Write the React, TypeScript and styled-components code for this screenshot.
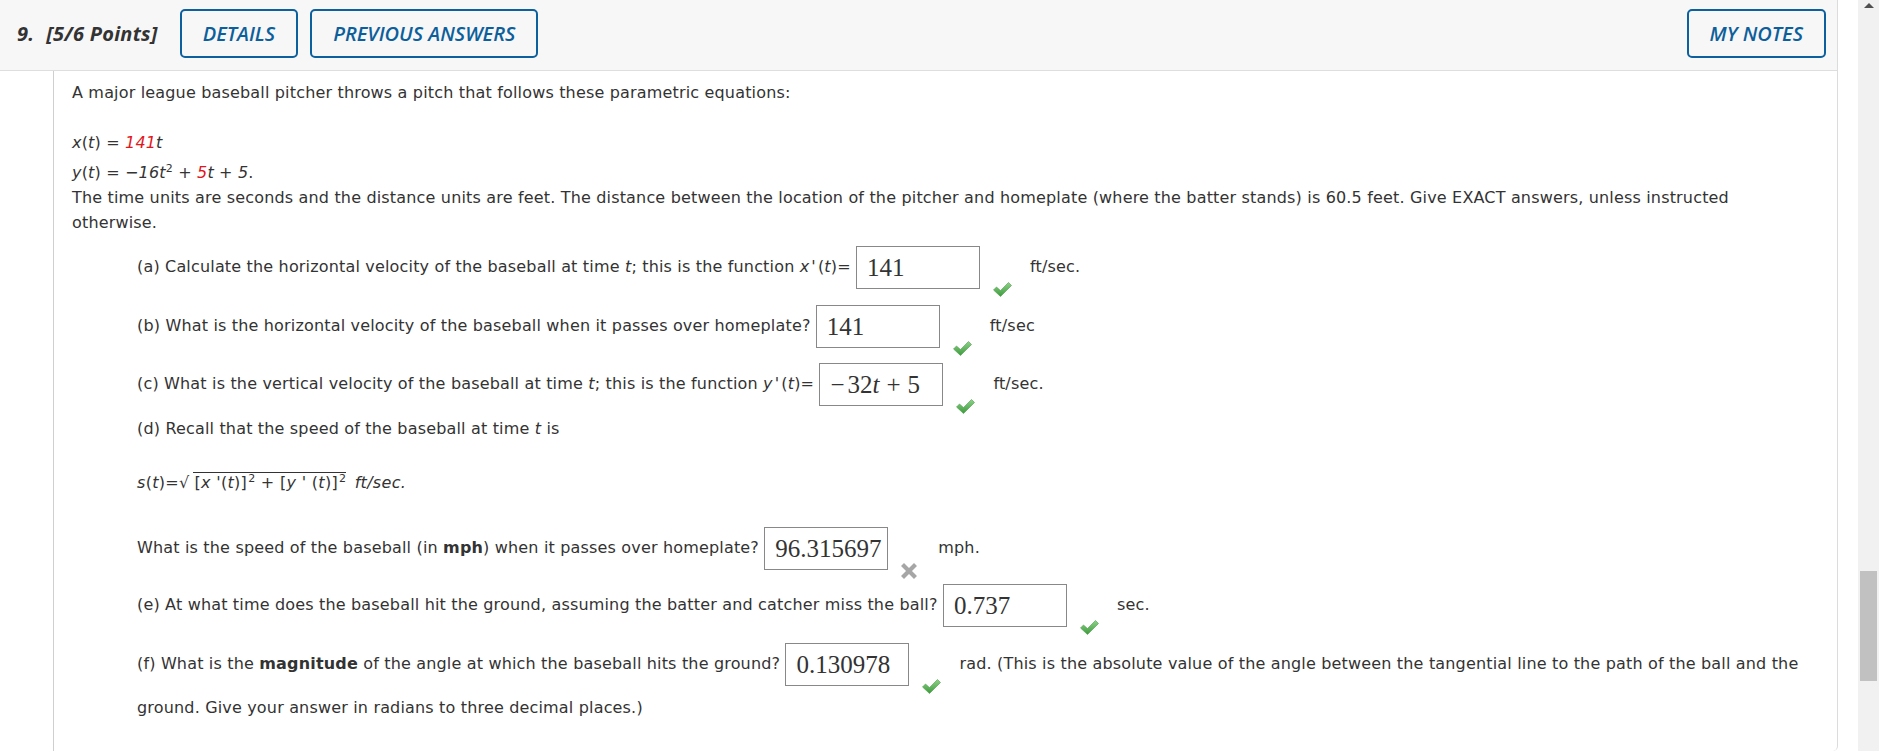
import styled, { createGlobalStyle } from "styled-components";

const GlobalStyle = createGlobalStyle`
  html, body {
    margin: 0;
    padding: 0;
    background: #fff;
    overflow: hidden;
  }
  body {
    font-family: "DejaVu Sans", Verdana, sans-serif;
    color: #333;
  }
`;

const Page = styled.div`
  display: flex;
  height: 100vh;
`;

const Question = styled.div`
  flex: 0 0 1838px;
  display: flex;
  flex-direction: column;
  border-right: 1px solid #dcdcdc;
  border-bottom-right-radius: 5px;
  box-sizing: border-box;
`;

const Header = styled.div`
  height: 71px;
  box-sizing: border-box;
  display: flex;
  align-items: center;
  padding: 0 11px 3px 17px;
  background: #f7f7f7;
  border-bottom: 1px solid #dedede;
`;

const Title = styled.div`
  font-family: "Open Sans", sans-serif;
  font-style: italic;
  font-weight: 700;
  font-size: 20px;
  letter-spacing: 0.25px;
  color: #333;
  margin-right: 22px;
  white-space: nowrap;

  span {
    margin-left: 12px;
  }
`;

const HeaderButton = styled.button<{ $push?: boolean; $min?: number }>`
  height: 49px;
  min-width: ${(p) => p.$min ?? 0}px;
  box-sizing: border-box;
  padding: 0 21px;
  margin-right: 12px;
  margin-left: ${(p) => (p.$push ? "auto" : "0")};
  border: 2px solid #0d609e;
  border-radius: 5px;
  background: transparent;
  font-family: "Open Sans", sans-serif;
  font-style: italic;
  font-weight: 600;
  font-size: 20px;
  color: #0d5f9b;

  &:last-child {
    margin-right: 0;
  }
`;

const Body = styled.div`
  flex: 1;
  margin-left: 53px;
  border-left: 1px solid #cfcfcf;
  padding: 9px 27px 0 18px;
  font-size: 16px;
  line-height: 25px;
  letter-spacing: 0.17px;
`;

const Line = styled.div<{ $top?: number }>`
  margin-top: ${(p) => p.$top ?? 0}px;
  white-space: nowrap;
`;

const Red = styled.span`
  color: #e3161b;
`;

const Em = styled.i``;

const Prime = styled.i`
  margin: 0 2px;
`;

const Sup = styled.sup<{ $gap?: number }>`
  font-size: 11px;
  line-height: 0;
  margin-left: ${(p) => p.$gap ?? 0}px;
`;

const Part = styled.div<{ $top: number; $lh?: number }>`
  margin-top: ${(p) => p.$top}px;
  line-height: ${(p) => p.$lh ?? 44}px;
  padding-left: 65px;
  white-space: nowrap;
`;

const AnswerWrap = styled.span`
  display: inline-block;
  position: relative;
  vertical-align: middle;
  margin-right: 50px;
  line-height: normal;
  letter-spacing: 0;
`;

const Box = styled.span`
  display: flex;
  align-items: center;
  width: 124px;
  height: 43px;
  box-sizing: border-box;
  padding-left: 10px;
  border: 1px solid #888;
  background: #fff;
  font-family: "Liberation Serif", "DejaVu Serif", serif;
  font-size: 25px;
  color: #333;
`;

const Minus = styled.span`
  margin-right: 3px;
`;

const MathOp = styled.span`
  margin: 0 7px;
`;

const Mark = styled.span`
  position: absolute;
  left: calc(100% + 13px);
  top: 36px;
  line-height: 0;
`;

const Bold = styled.b`
  font-weight: 700;
`;

const Root = styled.span`
  border-top: 1px solid #333;
  margin-left: 3px;
  padding-left: 2px;
`;

const Formula = styled.div<{ $top: number }>`
  margin-top: ${(p) => p.$top}px;
  padding-left: 65px;
  white-space: nowrap;
  letter-spacing: 0.3px;
`;

const Unit = styled.i`
  margin-left: 3px;
`;

const Filler = styled.div`
  flex: 0 0 20px;
`;

const Scrollbar = styled.div`
  flex: 0 0 21px;
  background: #f1f1f1;
  display: flex;
  flex-direction: column;
  align-items: center;
`;

const ArrowUp = styled.div`
  margin-top: 3px;
  width: 0;
  height: 0;
  border-left: 5px solid transparent;
  border-right: 5px solid transparent;
  border-bottom: 5px solid #505050;
`;

const Thumb = styled.div`
  margin-top: 563px;
  width: 17px;
  height: 110px;
  background: #c1c1c1;
`;

function Check() {
  return (
    <svg width="19" height="15" viewBox="0 0 19 15">
      <defs>
        <linearGradient id="chk" x1="0" y1="0" x2="0" y2="1">
          <stop offset="0" stopColor="#8ed287" />
          <stop offset="1" stopColor="#3d9a3d" />
        </linearGradient>
      </defs>
      <polygon
        points="0.5,8 3.5,5 7.5,8.6 15.5,0.5 18.5,3.5 7.5,14.5"
        fill="url(#chk)"
        stroke="#4c9f4a"
        strokeWidth="0.6"
        strokeLinejoin="round"
      />
    </svg>
  );
}

function Cross() {
  return (
    <svg width="16" height="16" viewBox="0 0 16 16">
      <path
        d="M3 3 L13 13 M13 3 L3 13"
        stroke="#a6a6a6"
        strokeWidth="4.2"
        strokeLinecap="square"
      />
    </svg>
  );
}

type AnswerProps = {
  children: React.ReactNode;
  correct?: boolean;
};

function Answer({ children, correct = true }: AnswerProps) {
  return (
    <AnswerWrap>
      <Box>{children}</Box>
      <Mark>{correct ? <Check /> : <Cross />}</Mark>
    </AnswerWrap>
  );
}

export default function App() {
  return (
    <Page>
      <GlobalStyle />
      <Question>
        <Header>
          <Title>
            9.<span>[5/6 Points]</span>
          </Title>
          <HeaderButton $min={118}>DETAILS</HeaderButton>
          <HeaderButton>PREVIOUS ANSWERS</HeaderButton>
          <HeaderButton $push>MY NOTES</HeaderButton>
        </Header>
        <Body>
          <Line>
            A major league baseball pitcher throws a pitch that follows these
            parametric equations:
          </Line>
          <Line $top={25}>
            <Em>x</Em>(<Em>t</Em>) = <Red><Em>141</Em></Red>
            <Em>t</Em>
          </Line>
          <Line $top={5}>
            <Em>y</Em>(<Em>t</Em>) = <Em>−16</Em>
            <Em>t</Em>
            <Sup>2</Sup> + <Red><Em>5</Em></Red>
            <Em>t</Em> + <Em>5</Em>.
          </Line>
          <Line>
            The time units are seconds and the distance units are feet. The
            distance between the location of the pitcher and homeplate (where
            the batter stands) is 60.5 feet. Give EXACT answers, unless
            instructed
          </Line>
          <Line>otherwise.</Line>

          <Part $top={10}>
            (a) Calculate the horizontal velocity of the baseball at time{" "}
            <Em>t</Em>; this is the function <Em>x</Em>
            <Prime>'</Prime>(<Em>t</Em>)= <Answer>141</Answer>ft/sec.
          </Part>
          <Part $top={15}>
            (b) What is the horizontal velocity of the baseball when it passes
            over homeplate? <Answer>141</Answer>ft/sec
          </Part>
          <Part $top={14}>
            (c) What is the vertical velocity of the baseball at time{" "}
            <Em>t</Em>; this is the function <Em>y</Em>
            <Prime>'</Prime>(<Em>t</Em>)={" "}
            <Answer>
              <Minus>−</Minus>32<Em>t</Em>
              <MathOp>+</MathOp>5
            </Answer>
            ft/sec.
          </Part>
          <Part $top={10} $lh={25}>
            (d) Recall that the speed of the baseball at time <Em>t</Em> is
          </Part>
          <Formula $top={29}>
            <Em>s</Em>(<Em>t</Em>)=√
            <Root>
              [<Em>x</Em> '(<Em>t</Em>)]<Sup $gap={1}>2</Sup> + [<Em>y</Em> '
              (<Em>t</Em>)]<Sup $gap={1}>2</Sup>
            </Root>{" "}
            <Unit>ft/sec.</Unit>
          </Formula>
          <Part $top={31}>
            What is the speed of the baseball (in <Bold>mph</Bold>) when it
            passes over homeplate?{" "}
            <Answer correct={false}>96.315697</Answer>mph.
          </Part>
          <Part $top={13}>
            (e) At what time does the baseball hit the ground, assuming the
            batter and catcher miss the ball? <Answer>0.737</Answer>sec.
          </Part>
          <Part $top={15}>
            (f) What is the <Bold>magnitude</Bold> of the angle at which the
            baseball hits the ground? <Answer>0.130978</Answer>rad. (This is
            the absolute value of the angle between the tangential line to the
            path of the ball and the
            <br />
            ground. Give your answer in radians to three decimal places.)
          </Part>
        </Body>
      </Question>
      <Filler />
      <Scrollbar>
        <ArrowUp />
        <Thumb />
      </Scrollbar>
    </Page>
  );
}
